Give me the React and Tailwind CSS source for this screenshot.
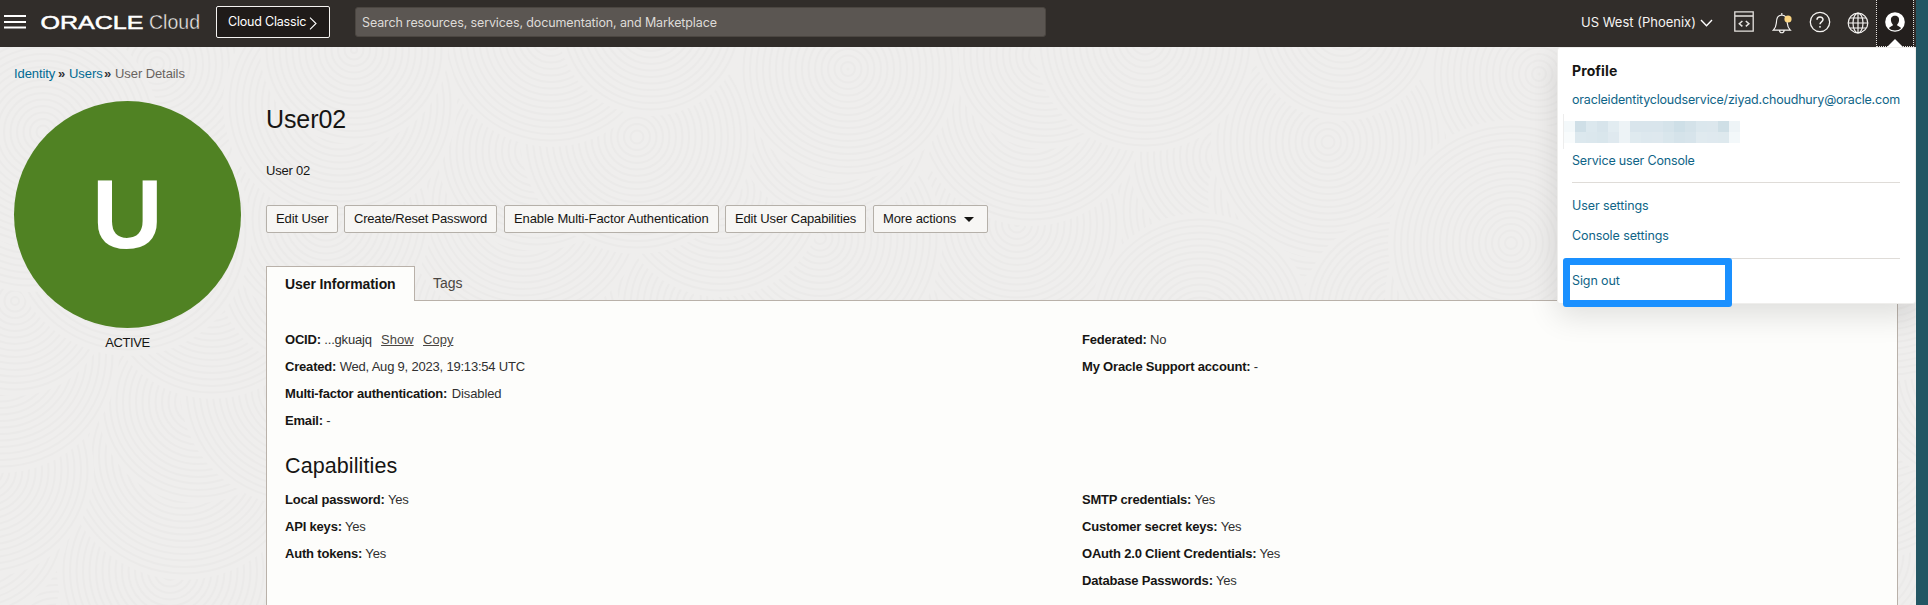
import React from "react";

const BODY = "font-['Liberation_Sans',Arial,sans-serif]";

const centers = [];
for (let r = 0; r < 8; r++) {
  for (let c = 0; c < 13; c++) {
    centers.push({
      x: c * 168 + ((r * 83 + c * 29) % 97) - 40,
      y: r * 84 + ((c * 47 + r * 31) % 61) - 30,
      r: 94 + ((c * 17 + r * 23) % 34),
    });
  }
}
centers.sort((a, b) => ((a.x * 7 + a.y * 13) % 101) - ((b.x * 7 + b.y * 13) % 101));

function Texture() {
  return (
    <svg className="absolute inset-0 -z-10" width="1916" height="558" aria-hidden="true">
      {centers.map((p, i) => (
        <g key={i} fill="none" stroke="#ebeae9" strokeWidth="2">
          <circle cx={p.x} cy={p.y} r={p.r} fill="#efeeed" stroke="none" />
          {Array.from({ length: Math.floor(p.r / 6.5) }, (_, k) => (
            <circle key={k} cx={p.x} cy={p.y} r={p.r - (k + 1) * 6.5} />
          ))}
        </g>
      ))}
    </svg>
  );
}

function Header() {
  return (
    <header className="flex h-[47px] w-[1916px] items-start bg-[#312d2a] font-[Inter,sans-serif] text-white">
      <svg className="ml-1 mt-[15px]" width="22" height="14" stroke="#fff" strokeWidth="2">
        <path d="M0 1H22M0 7H22M0 12.5H22" />
      </svg>
      <svg className="ml-[15px] mt-[8px] overflow-visible" width="160" height="28" fill="#fff">
        <text x="-0.5" y="21" fontFamily="Liberation Sans" fontSize="18" stroke="#fff" strokeWidth="0.5" textLength="103" lengthAdjust="spacingAndGlyphs">ORACLE</text>
        <text x="108" y="21" fontFamily="Liberation Sans" fontSize="20" fill="#f2f0ee" stroke="#312d2a" strokeWidth="0.4" textLength="51" lengthAdjust="spacingAndGlyphs">Cloud</text>
      </svg>
      <button className="ml-[15px] mt-[6px] flex h-8 w-[114px] items-center rounded-[2px] border border-[#f5f3f1] bg-[#1f1b19] pl-[11px] text-[12.5px] tracking-[-0.2px]">
        <span className="w-[81px] whitespace-nowrap text-left">Cloud Classic</span>
        <svg width="8" height="13" className="mt-0.5" fill="none" stroke="#fff" strokeWidth="1.1"><path d="M1 .7L7 6.5L1 12.3" /></svg>
      </button>
      <div className="ml-[25px] mt-[7px] flex h-[30px] w-[691px] items-center rounded-[3px] border border-[#4b4641] bg-[#5b5652] pl-[6px] pt-[2px] text-[12.5px] tracking-[-0.13px] text-[#dedbd8]">
        Search resources, services, documentation, and Marketplace
      </div>
      <div className="ml-auto flex h-[47px] items-center">
        <span className="mt-[-1px] w-[119px] whitespace-nowrap text-[13px] text-[#f5f3f1]">US West (Phoenix)</span>
        <svg width="13" height="8" fill="none" stroke="#fff" strokeWidth="1.4" className="mt-[-1px]"><path d="M1 1L6.5 6.7L12 1" /></svg>
        <svg className="ml-[21px] mt-[-4px]" width="20" height="21" fill="none" stroke="#e6e3e0" strokeWidth="1.3">
          <path d="M.8 .8H19.2V20.2H.8ZM.8 5H19.2" /><path d="M8.4 10L5.3 12.7L8.4 15.4M11.8 10L14.9 12.7L11.8 15.4" strokeWidth="1.5" />
        </svg>
        <svg className="ml-[18px] mt-[-2px]" width="21" height="22" fill="none" stroke="#f5f3f1" strokeWidth="1.2">
          <path d="M1.3 18.2C3.4 16.2 4 15 4.3 11.3C4.6 6 5.4 3.4 9.8 3C14.2 3.4 15 6 15.3 11.3C15.6 15 16.2 16.2 18.3 18.2ZM9.8 3V1M7.5 18.5C7.6 21.5 12 21.5 12.1 18.5" />
          <circle cx="16" cy="7" r="3.6" fill="#fbd582" stroke="none" />
        </svg>
        <svg className="ml-[16px] mt-[-3px]" width="22" height="22" fill="none" stroke="#f5f3f1" strokeWidth="1.3">
          <circle cx="11" cy="11" r="9.7" /><path d="M8 8.8C8 4.9 14 5 14 8.6C14 11 11 10.7 11 13.3" strokeWidth="1.5" /><circle cx="11" cy="15.8" r=".9" fill="#fff" stroke="none" />
        </svg>
        <svg className="ml-[16px] mt-[-2px]" width="22" height="22" fill="none" stroke="#f5f3f1" strokeWidth="1.2">
          <circle cx="11" cy="11" r="9.8" /><ellipse cx="11" cy="11" rx="5" ry="9.8" /><path d="M11 1V21M1.2 11H20.8M2.8 6H19.2M2.8 16H19.2" />
        </svg>
        <div className="relative ml-[7px] mr-[2px] flex h-[47px] w-[38px] justify-center border-x border-b border-dotted border-[#e5e2df] bg-[#231f1d]">
          <svg className="mt-3" width="20" height="20">
            <circle cx="10" cy="10" r="9.8" fill="#fff" />
            <path d="M10 3.8C6.6 3.8 5.6 6.2 6 8.8C6.3 10.8 7 11.6 7.8 12.4V13.5C6.4 14.4 4.6 14.8 4 16.2C7 19.1 13 19.1 16 16.2C15.4 14.8 13.6 14.4 12.2 13.5V12.4C13 11.6 13.7 10.8 14 8.8C14.4 6.2 13.4 3.8 10 3.8Z" fill="#231f1d" />
          </svg>
          <svg className="absolute bottom-[-1px] left-[10px]" width="16" height="8"><path d="M0 8L8 0L16 8Z" fill="#fff" /></svg>
        </div>
      </div>
    </header>
  );
}

function Btn({ className, children }) {
  return (
    <button className={`${className} flex h-7 items-center whitespace-nowrap rounded-[2px] border border-[#b5b0a9] bg-[#f7f6f4] pl-[9px] text-[13px] text-[#161513]`}>
      {children}
    </button>
  );
}

function Row({ label, children }) {
  return (
    <div className="h-[27px] whitespace-nowrap text-[13px] leading-[27px] tracking-[-0.2px] text-[#303030]">
      <b className="tracking-[-0.19px] text-[#161513]">{label}:</b> {children}
    </div>
  );
}

const mosaic = [
  ["#f3f8fa", "#cfdfe7", "#dce8ee", "#d7e4eb", "#e2ecf1", "#edf3f6", "#d9e5ec", "#d9e5ec", "#d9e5ec", "#d5e3ea", "#cedfe7", "#d4e2e9", "#dbe7ed", "#dce7ed", "#cfdfe6", "#eef4f7"],
  ["#f8fbfc", "#dce8ee", "#dbe7ed", "#d9e6ec", "#dfe9ef", "#edf3f6", "#dfeaef", "#dde8ee", "#dee8ee", "#d9e6ec", "#d5e3ea", "#d7e4eb", "#e0eaef", "#dfe9ef", "#dee9ee", "#f3f8fa"],
];

function ProfileMenu() {
  return (
    <aside className="absolute right-0 top-0 flex h-[257px] w-[359px] flex-col rounded-[3px] border border-[#efeeec] bg-white pl-[14px] pr-[15px] font-[Inter,sans-serif] text-[12.5px] tracking-[-0.1px] text-[#0f6487] shadow-[0_12px_30px_rgba(0,0,0,0.12)]">
      <h2 className="mt-[11px] h-[24px] text-[14px] font-bold leading-[24px] tracking-[0.1px] text-[#161513]">Profile</h2>
      <a className="mt-[5px] h-6 whitespace-nowrap leading-6 tracking-[-0.18px]">oracleidentitycloudservice/ziyad.choudhury@oracle.com</a>
      <div className="-ml-[9px] mt-[2px] flex h-[35px] flex-col border-l border-[#ededed] pt-[7px]">
        {mosaic.map((row, i) => (
          <div key={i} className="flex">
            {row.map((c, j) => <span key={j} className="h-[11px] w-[11px]" style={{ background: c }} />)}
          </div>
        ))}
      </div>
      <a className="h-[22px] leading-[24px] tracking-[-0.17px]">Service user Console</a>
      <hr className="mt-[11px] border-[#dfdcd8]" />
      <a className="mt-[10px] h-[30px] leading-[25px]">User settings</a>
      <a className="h-[26px] leading-[25px]">Console settings</a>
      <hr className="mt-[9px] border-[#dfdcd8]" />
      <a className="mt-[9px] h-[26px] leading-[26px]">Sign out</a>
      <div className="absolute left-[5px] top-[210px] h-[49px] w-[169px] rounded-[3px] border-[7px] border-[#1a90ff]" />
    </aside>
  );
}

export default function App() {
  return (
    <div className={`h-[605px] w-[1928px] overflow-hidden bg-[#235663] ${BODY}`}>
      <Header />
      <main className="relative isolate flex h-[558px] w-[1916px] flex-col overflow-hidden bg-[#efeeed]">
        <Texture />
        <nav className="ml-[14px] mt-[17px] flex h-5 items-center whitespace-nowrap text-[13px] tracking-[-0.08px] text-[#006a93]">
          <span className="w-[44px]">Identity</span>
          <span className="w-[11px] font-bold text-[#333]">»</span>
          <span className="w-[35px]">Users</span>
          <span className="w-[11px] font-bold text-[#333]">»</span>
          <span className="text-[#69635f]">User Details</span>
        </nav>
        <div className="flex flex-1">
          <section className="ml-[14px] mt-[17px] flex w-[227px] flex-col items-center">
            <div className="flex h-[227px] w-[227px] items-center justify-center rounded-full bg-[#508223] pb-[2px] text-[98px] font-bold leading-none text-white">U</div>
            <span className="mt-[5px] text-[13px] leading-5 tracking-[-0.4px] text-[#161513]">ACTIVE</span>
          </section>
          <section className="ml-[25px] flex w-[1632px] flex-col">
            <h1 className="mt-[17px] h-9 text-[25px] leading-9 tracking-[-0.1px] text-[#161513]">User02</h1>
            <p className="mt-[24px] h-5 text-[13px] leading-5 tracking-[-0.2px] text-[#161513]">User 02</p>
            <div className="mt-[24px] flex gap-[6px]">
              <Btn className="w-[72px] tracking-[-0.12px]">Edit User</Btn>
              <Btn className="w-[153px] tracking-[-0.2px]">Create/Reset Password</Btn>
              <Btn className="ml-px w-[215px] tracking-[-0.1px]">Enable Multi-Factor Authentication</Btn>
              <Btn className="w-[141px] tracking-[-0.14px]">Edit User Capabilities</Btn>
              <Btn className="ml-px w-[115px] tracking-[-0.1px]">
                <span className="w-[81px] text-left">More actions</span>
                <svg width="10" height="5"><path d="M0 0H10L5 5Z" fill="#161513" /></svg>
              </Btn>
            </div>
            <div className="z-10 mt-[33px] flex h-[35px]">
              <div className="w-[149px] whitespace-nowrap border border-b-0 border-[#b9b1a9] bg-[#fdfdfb] pl-[18px] text-[14px] font-bold leading-[34px] tracking-[-0.09px] text-[#161513]">User Information</div>
              <div className="pl-[18px] text-[14px] leading-[34px] text-[#4a4642]">Tags</div>
            </div>
            <div className="-mt-px flex-1 border border-b-0 border-[#b9b1a9] bg-[#fdfdfb] px-[18px] pt-[25px]">
              <div className="grid h-[108px] grid-cols-[797px_1fr]">
                <div>
                  <Row label="OCID">...gkuajq <u className="ml-[6px] tracking-normal text-[#4a4642]">Show</u> <u className="ml-[6px] tracking-normal text-[#4a4642]">Copy</u></Row>
                  <Row label="Created">Wed, Aug 9, 2023, 19:13:54 UTC</Row>
                  <Row label="Multi-factor authentication"><span className="ml-px tracking-[-0.1px]">Disabled</span></Row>
                  <Row label="Email">-</Row>
                </div>
                <div>
                  <Row label="Federated">No</Row>
                  <Row label="My Oracle Support account">-</Row>
                </div>
              </div>
              <h2 className="mt-[16px] h-[36px] text-[21.5px] leading-[32px] tracking-[0.1px] text-[#161513]">Capabilities</h2>
              <div className="grid grid-cols-[797px_1fr]">
                <div>
                  <Row label="Local password">Yes</Row>
                  <Row label="API keys">Yes</Row>
                  <Row label="Auth tokens">Yes</Row>
                </div>
                <div>
                  <Row label="SMTP credentials">Yes</Row>
                  <Row label="Customer secret keys">Yes</Row>
                  <Row label="OAuth 2.0 Client Credentials">Yes</Row>
                  <Row label="Database Passwords">Yes</Row>
                </div>
              </div>
            </div>
          </section>
        </div>
        <div className="absolute right-0 top-0 z-20"><ProfileMenu /></div>
      </main>
    </div>
  );
}
